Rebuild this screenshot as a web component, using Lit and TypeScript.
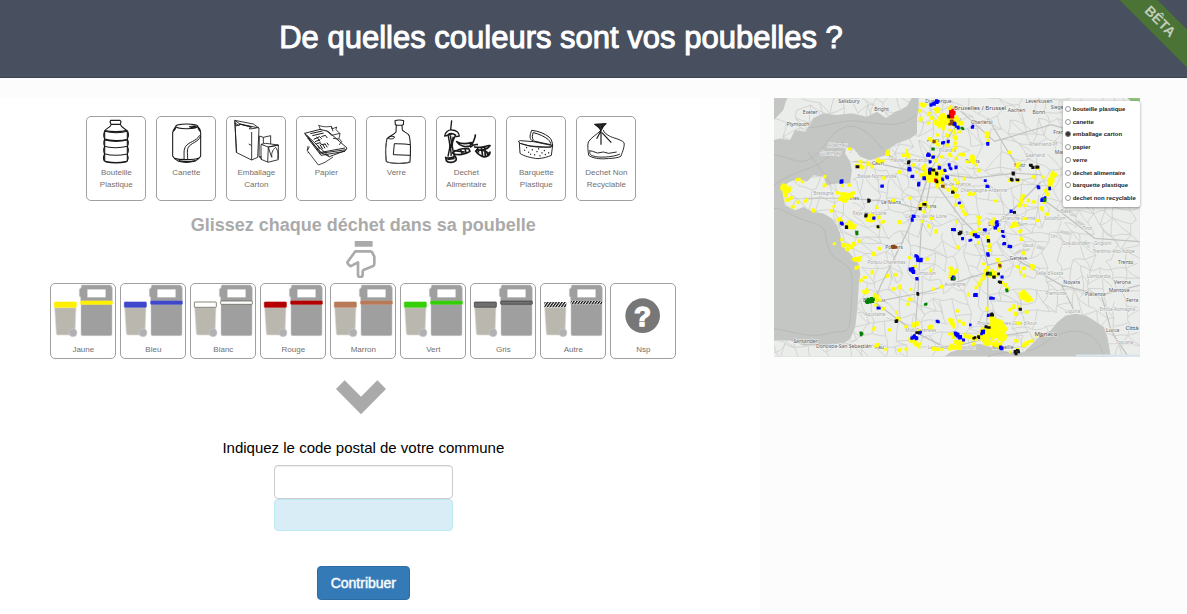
import { LitElement, html, css, svg } from "lit";
import { customElement, state } from "lit/decorators.js";

/* ---------- Waste drawings ---------- */

const bottle = svg`
  <path d="M95 31h28l3 4-2 8h-28l-3-7zM97 43c-3 10-17 12-20 20v90c8 6 60 6 68 0V65c-4-9-17-11-21-22" stroke-width="3.4"/>
  <path d="M78 64c20 6 50 5 69-1M77 87c18 6 50 6 68 1M77 90c20 5 48 5 68 0M76 109c18 6 50 5 69 0M76 131c20 6 50 5 69 1M77 64c-4 8-3 18 0 24-4 5-3 16 0 22-5 5-3 18 0 22-4 6-5 14-1 22M146 64c4 8 2 18-1 24 4 6 3 16 0 22 4 6 3 17 0 23 3 6 3 14 0 20" stroke-width="3.2"/>
  <path d="M77 62c20 4 48 4 68-1M78 154c20 6 48 5 66 0" stroke-width="4"/>`;

const can = svg`
  <ellipse cx="323" cy="49" rx="33" ry="7" stroke-width="3.2"/>
  <path d="M290 50c-3 4-8 12-9 18v70c3 6 11 13 18 16 14 4 36 3 50-1 6-3 13-9 16-14V66c-1-6-6-14-10-18M281 66c6-4 8-8 10-14M365 66c-5-4-7-9-9-15" stroke-width="3.2"/>
  <path d="M315 149c1-20-2-28 5-40 10-14 32-15 41-32l4 2c-8 18-30 20-37 33-5 10-2 18-2 37" stroke-width="3"/>
  <path d="M286 145c20 6 58 5 74-1M299 152c14 3 36 3 50 0" stroke-width="4"/>
  <path d="M330 50l18-3 6 5-16 2z" fill="#111" stroke-width="2"/>`;

const boxes = svg`
  <path d="M467 31l16 11 57 12-17-12zM467 31l6 97 45 22M483 42l-3 5-10-7 1 8 13-5 31 7-4 7 22-3M540 54l-4 88-18 8M518 66v84M483 42l35 10M468 34l4 94" stroke-width="2.6"/>
  <path d="M541 78l12 4 22-5v25M553 82v18M541 78l-1 62 8 6M546 103l14-3 38 5-8 2-22 4zM568 111l-2 45-20-8V104M598 105v44l-32 8M568 111l30-6M568 112l10 30M590 112c-10 8-14 20-11 30M590 112c8 12 8 22 6 34M540 140l8 1M509 102l8 4" stroke-width="2.6"/>`;

const papers = svg`
  <path d="M677 70l46-12 24 6 57 50-5 8-48 18zM677 70l5 8 44 49 72-13M751 140l-30-15M684 76l40 54 78-11M686 84l40 52 72-12" stroke-width="2.8"/>
  <path d="M694 71l36-8M700 77l34-8M704 88l18-8 6 6M708 95l16-6M712 101l12-3 3 6 12-2M727 80l12-4 6 8M713 80l10 14M716 106l6 12M723 104l8 13M731 103l7 12M738 101l7 11M744 98l5 8" stroke-width="3"/>
  <path d="M719 46c8 4 24 6 38 3l2 8 14-6-2 8 12 12-3 14 8 10-8 10M719 46l6 14M757 49l5 15M742 62l16 14 25-6M762 85l18 2M687 108l-2 14 33 43 20-8 24-16M685 122l6-12M690 127l-4 2" stroke-width="2.4"/>`;

const glass = svg`
  <path d="M105 32c6-3 20-3 26 0l-1 12c-6 2-18 2-24 0zM109 46l-1 20c-6 8-20 12-27 20-5 20-4 50-2 68 10 8 58 8 71 2 2-30 2-60-2-78-4-10-18-12-21-18l-1-16" stroke-width="3.2"/>
  <path d="M150 104c-16-3-32-2-47-3l-3 33 50 2M84 84c4-6 14-7 20-3-2 6-14 8-20 3" stroke-width="3"/>
  <path d="M80 95c-6 20-4 44-1 60M82 156c20 5 50 5 66 0" stroke="#666" stroke-width="3"/>`;

const food = svg`
  <path d="M275 31l-3 28M254 78c0-10 12-20 22-18 12 0 22 8 22 18l-9 2c-4-6-8-10-14-8-6 4-14 4-21 6zM262 76c6-8 16-8 26 0" stroke-width="4"/>
  <path d="M265 78c2 14 6 24 4 36-2 12-4 18-5 26M286 78c-8 12-10 20-9 32 2 14 4 20 6 28M272 76c-2 10 6 20 1 34-4 12 3 20 0 28M280 80c-4 12-2 20-5 30" stroke-width="4.4"/>
  <path d="M257 142c6 4 20 2 28-4 4 6 6 10 2 14-8 8-24 6-28 0zM262 148l22-3" stroke-width="5"/>
  <path d="M290 95c10 6 26 8 44 3l-4 10c-14 4-32 0-40-13zM278 128c12-8 30-14 48-12l4 8c-14 10-36 12-50 7zM346 73c2 12-8 22-10 32M330 112c8-8 14-10 24-8M300 116l6 14M315 116l3 12M282 122l32 4" stroke-width="5"/>
  <path d="M342 110c10 4 28 2 38-2 4-2 6-2 10-1-8 12-26 16-42 12M346 122c12-4 30-2 36 6 4 3 8 0 8-2 0 12-14 18-26 12-8-4-14-8-18-16M352 110l4 18M364 112l4 26M374 112l2 28M380 124l4 16" stroke-width="5"/>`;

const tray = svg`
  <path d="M475 94l6-2 40 3 57 12-6 5-62-4-30-8zM478 98l2 32c10 8 34 14 54 16 14-1 32-6 40-10l4-30M484 101c20 8 60 14 90 9" stroke-width="2.8"/>
  <path d="M516 92c-9-8-6-18-1-31 20 2 40 10 52 20 8 7 10 16 11 26M520 90c-5-6-3-16 0-23M520 68c18 4 34 12 44 20 6 6 8 10 9 17M516 92l56 12" stroke-width="3"/>
  <path d="M494 120v1M506 126v1M517 119v1M524 134v1M531 124v1M540 137v1M546 128v1M556 133v1M566 128v1M512 132v1M536 116v1M500 112v1M553 121v1" stroke-width="3.6" stroke-linecap="round"/>`;

const bag = svg`
  <path d="M723 60c-12 14-30 22-38 36-3 10-1 28 1 40 10 8 34 12 52 10 20-1 38-2 45-8 4-12 12-30 9-40-8-10-34-14-44-20-10-6-16-10-18-18M690 122c-2 8 0 14 10 16 14 6 60 4 80-6M688 122l10 2 14 5 18-3 16 4 24-4" stroke-width="2.8"/>
  <path d="M704 43l34-2-8 8-7 12-8-10zM723 62v42M726 68l28 30M722 64l-12 22M712 45l8 8M728 43l-4 10" fill="#333" stroke-width="3.6"/>`;

const WASTE = [
  { label: "Bouteille Plastique", art: bottle, box: "24 21 174 150" },
  { label: "Canette", art: can, box: "234 21 174 150" },
  { label: "Emballage Carton", art: boxes, box: "444 21 174 150" },
  { label: "Papier", art: papers, box: "654 21 174 150" },
  { label: "Verre", art: glass, box: "21 21 174 150" },
  { label: "Dechet Alimentaire", art: food, box: "231 21 174 150" },
  { label: "Barquette Plastique", art: tray, box: "441 21 174 150" },
  { label: "Dechet Non Recyclable", art: bag, box: "651 21 174 150" },
];

/* ---------- Bins ---------- */

const BINS = [
  { label: "Jaune", fill: "#fff000", edge: "#fff000" },
  { label: "Bleu", fill: "#3f48cc", edge: "#3f48cc" },
  { label: "Blanc", fill: "#ffffff", edge: "#4a4a3c" },
  { label: "Rouge", fill: "#b50000", edge: "#b50000" },
  { label: "Marron", fill: "#b97a57", edge: "#b97a57" },
  { label: "Vert", fill: "#35cf0a", edge: "#35cf0a" },
  { label: "Gris", fill: "#6f6f6f", edge: "#2b2b2b" },
  { label: "Autre", fill: "url(#hatch)", edge: "none" },
];

const binArt = (fill: string, edge: string) => svg`
  <defs>
    <pattern id="hatch" width="7" height="7" patternUnits="userSpaceOnUse" patternTransform="rotate(35)">
      <rect width="7" height="7" fill="#fff"/><rect width="4" height="7" fill="#111"/>
    </pattern>
  </defs>
  <path d="M47 98h64l-3 78q0 4-4 4H57q-4 0-5-4z" fill="#b9b7ae" stroke="#dddcd8" stroke-width="2"/>
  <circle cx="102" cy="173" r="12" fill="#b1b1b3" stroke="#cfcfd0" stroke-width="1.5"/>
  <path d="M128 30h84q8 2 8 12v36h-95V66l-4-2V42l5-3z" fill="#9f9f9f" stroke="#c9c9c9" stroke-width="1.5"/>
  <rect x="145" y="43" width="55" height="24" fill="#fff" stroke="#c4c4c4"/>
  <path d="M126 88h93v89q0 5-5 5h-83q-5 0-5-5z" fill="#9f9f9f" stroke="#c9c9c9" stroke-width="1.5"/>
  <rect x="46" y="81" width="66" height="16" rx="2" fill=${fill} stroke=${edge} stroke-width="2"/>
  <rect x="125" y="78" width="95" height="10" rx="2" fill=${fill} stroke=${edge} stroke-width="2"/>`;

/* ---------- Map ---------- */

// Small deterministic generator, so that the map is identical on each render.
function randomizer(seed: number) {
  let s = seed;
  return () => (s = (s * 16807) % 2147483647) / 2147483647;
}

const LAND = [
  // Great Britain
  "M0 126L18 121 48 126 63 96 93 101 118 60 148 46 188 51 233 46 278 56 308 41 335 60 363 41 378 36 398 24 412 0H38L28 36 0 66Z",
  // Continent
  "M433 0V21L428 66V106L408 121 368 136 338 156 333 171 288 186 258 176 238 151 216 148 213 166 228 191 233 216 228 256 188 256 158 261 148 236 118 231 98 251 73 241 48 251 23 266 28 296 33 321 63 336 88 326 118 341 148 346 173 361 188 381 198 406 203 441 228 466 253 496 258 526 253 566 250 626 243 686 228 721 208 734 138 741 88 741 48 726 0 726V774H510L528 761 558 751 588 738 618 736 668 751 708 761 748 761 773 736 798 711 828 696 848 671 873 651 903 646 933 651 958 666 988 686 998 716 1008 774H1095V0Z",
];

const SEA_LINES =
  "M0 170C60 175 90 230 160 130S300 120 330 160M0 260C70 210 120 220 170 170S200 130 215 150M30 80C120 110 180 60 260 70S380 90 425 50M0 330C30 330 60 360 110 372S150 400 160 440 190 480 215 500 235 560 230 640 215 690 160 705 60 700 0 690M640 774C700 750 760 770 800 740S880 690 920 700 980 740 985 774M170 261C150 220 120 190 100 160";

const BIG_ROADS =
  "M430 330L465 225 520 120 560 60M470 225L600 240 720 225 800 230M465 230L560 360 620 420 640 500 640 640 630 720M460 235L430 330 350 310 220 300 90 300M430 330L380 440 320 560 300 610M300 610L420 700 520 750 630 720 760 700M640 400L720 330 800 250M640 500L720 480 860 560 980 590 1095 560M330 165L400 200 465 225M300 610L460 580 640 520M470 240L440 400 430 600 420 720M860 560L900 640M980 590L1010 700 1060 774M640 60L700 160 740 220M560 40L660 130 830 80 900 100M800 300L870 350 960 420 1095 430M240 190L330 200 400 215";

function minorRoads() {
  const rnd = randomizer(4211);
  const cols = 33;
  const rows = 24;
  const step = 34;
  const pts: number[][] = [];
  for (let r = 0; r < rows; r++)
    for (let c = 0; c < cols; c++)
      pts.push([c * step + (rnd() - 0.5) * 30, r * step + (rnd() - 0.5) * 30]);
  let d = "";
  const link = (a: number[], b: number[]) => {
    const mx = (a[0] + b[0]) / 2 + (rnd() - 0.5) * 16;
    const my = (a[1] + b[1]) / 2 + (rnd() - 0.5) * 16;
    d += `M${a[0] | 0} ${a[1] | 0}Q${mx | 0} ${my | 0} ${b[0] | 0} ${b[1] | 0}`;
  };
  for (let r = 0; r < rows - 1; r++)
    for (let c = 0; c < cols - 1; c++) {
      const i = r * cols + c;
      if (rnd() > 0.3) link(pts[i], pts[i + 1]);
      if (rnd() > 0.3) link(pts[i], pts[i + cols]);
      if (rnd() > 0.72) link(pts[i], pts[i + cols + 1]);
    }
  return d;
}

// Each quadrant of the map has its own origin; a spot is "x y radius".
const QUADRANTS = [
  {
    origin: "translate(-12,-24)",
    spots: {
      "#ffff00": "455 45 8,447 62 5,450 88 6,463 45 5,475 72 6,485 82 6,500 60 9,515 75 8,510 98 16,530 92 18,545 100 14,560 85 8,540 55 6,495 95 8,475 100 5,540 120 5,530 135 5,520 115 5,500 135 5,480 150 7,495 155 7,503 165 4,530 165 5,555 160 5,560 140 5,565 125 5,515 200 5,540 195 6,548 180 5,560 205 5,485 195 5,495 210 6,505 225 6,460 235 6,455 255 9,470 250 12,485 245 14,495 260 18,480 265 12,510 268 12,515 245 8,500 285 8,520 290 5,535 300 6,545 290 5,465 225 5,440 245 5,430 225 4,415 195 8,400 197 5,410 182 4,352 188 7,340 210 5,325 212 8,295 220 6,305 228 5,275 228 8,270 215 4,238 175 5,343 264 5,385 245 5,370 330 4,320 350 5,300 385 14,325 380 5,388 392 6,338 395 4,260 225 5,85 268 6,97 275 5,40 290 10,55 298 9,45 310 9,60 325 7,50 330 6,70 350 6,85 337 5,108 332 7,130 360 5,165 285 6,163 260 4,200 308 5,215 312 5,225 322 14,240 315 8,212 325 7,250 310 4,192 350 5,208 388 8,215 398 6,240 402 8,185 362 4,215 285 5,240 285 4,465 340 7,450 345 5,475 350 5,460 365 5,420 325 4,555 345 5,560 320 4,485 385 4,455 392 4",
      "#0000ff": "490 40 7,500 34 6,483 44 5,553 102 6,560 110 5,533 153 4,518 158 4,475 195 7,490 202 5,478 215 4,418 235 6,425 258 5,445 282 5,460 265 4,480 240 6,505 235 6,535 225 5,525 240 5,530 260 5,515 268 4,215 272 6,334 287 5,430 377 5,312 385 5,425 388 4,555 232 4",
      "#ff0000": "545 65 8,540 78 7,548 72 6,494 270 3",
      "#8b4513": "547 97 6,540 102 5,490 153 5,517 290 4",
      "#008000": "490 176 5",
      "#111111": "262 228 5,416 216 5,478 248 4,500 273 4,488 240 4,295 330 6,448 356 4,548 306 4,288 377 5,462 342 4,534 80 4,500 250 3",
    },
    names: [
      [204, 38, "Salisbury"], [98, 72, "Exeter"], [50, 108, "Plymouth"], [312, 62, "Bright"],
      [465, 40, "Dunkerque"], [470, 157, "Arras"], [305, 224, "Caen"], [215, 330, "Rennes"],
      [333, 342, "Le Mans"], [443, 352, "Orléans"],
    ],
    regions: [
      [173, 170, "Alderney"], [150, 196, "Guernsey"], [360, 217, "Haute-Normandie"], [505, 187, "Picardie"],
      [262, 262, "Basse-Normandie"], [130, 314, "Bretagne"], [515, 286, "Île-de-France"],
      [247, 374, "Pays de la Loire"], [405, 384, "Centre-Val de Loire"],
    ],
  },
  {
    origin: "translate(528,-24)",
    spots: {
      "#ffff00": "25 98 7,35 100 7,12 125 6,15 145 7,12 160 5,14 175 5,28 192 4,40 195 4,110 128 6,108 140 6,112 150 4,65 205 10,68 215 8,50 215 4,75 225 5,85 240 6,175 185 4,202 222 7,200 232 5,205 268 5,198 272 5,180 270 4,262 232 3,15 270 5,20 280 5,10 300 8,18 318 6,60 310 7,72 312 5,42 265 4,308 252 10,300 270 11,298 282 8,285 300 7,290 312 6,250 262 5,278 262 4,280 335 7,275 355 7,288 372 5,250 335 4,218 318 6,212 332 6,208 345 6,235 330 4,222 345 5,262 392 4,135 332 4,85 382 6,130 385 5,35 350 6,40 362 5,45 370 5,20 395 5,125 400 8,222 385 4,195 400 6,5 90 5",
      "#0000ff": "12 102 5,22 112 5,67 110 4,110 162 3,103 270 4,112 288 5,264 291 5,298 294 5,280 325 8,275 328 5,137 398 5,180 364 4,27 340 4,0 235 4",
      "#ff0000": "4 68 8,5 80 5",
      "#8b4513": "5 96 6",
      "#008000": "36 114 4,283 330 3",
      "#111111": "240 226 5,245 232 4,261 230 3,184 268 4,190 250 4,200 270 3,192 364 4,8 307 3",
    },
    names: [
      [172, 67, "Aachen"], [246, 71, "Bonn"], [225, 40, "Leverkusen"], [62, 103, "Charleroi"],
      [300, 56, "Siege"], [45, 219, "Reims"], [190, 232, "Metz"], [308, 132, "Fran"], [312, 192, "Man"],
    ],
    regions: [
      [236, 168, "Rheinland-Pf"], [225, 200, "Saarland"], [30, 304, "Champagne-Ardenne"],
      [155, 388, "Franche-Comté"], [330, 368, "Basel"], [280, 390, "Solothurn"],
    ],
  },
  {
    origin: "translate(-12,366)",
    spots: {
      "#ffff00": "240 15 12,250 18 8,235 8 5,325 20 5,338 5 4,388 5 4,475 17 5,498 34 6,192 69 5,215 58 5,222 75 6,238 75 6,252 70 6,245 82 4,230 88 4,268 62 4,310 102 6,328 85 5,265 115 8,252 117 6,260 140 6,272 182 5,284 170 4,305 155 4,352 166 4,375 163 5,286 212 8,312 226 6,322 228 5,318 240 6,328 238 5,316 252 5,340 265 5,418 112 5,433 137 4,482 150 4,390 200 6,370 205 4,420 205 5,420 238 6,415 250 4,490 205 4,513 198 5,540 145 6,545 160 9,558 152 6,540 170 6,380 275 4,384 295 7,430 312 8,440 310 6,445 330 4,480 320 8,500 385 5,542 300 9,548 310 6,565 300 5,312 324 5,360 328 4,408 320 4,420 358 8,438 370 7,450 372 5,432 365 7,448 380 4,388 388 5,320 375 7,345 385 4,408 385 4,490 385 6,512 385 4,560 365 9,545 375 6,568 380 6,535 385 5,470 118 4",
      "#0000ff": "215 10 5,440 108 6,448 118 8,425 148 8,430 152 6,441 175 4,326 263 4,450 337 4,430 350 8,438 352 6,502 304 5,557 340 6,562 345 5,548 27 5,440 115 4",
      "#8b4513": "368 80 6,375 80 4",
      "#008000": "260 38 4,295 240 9,306 238 7,290 244 6,272 340 6,466 250 3,552 170 5",
      "#111111": "227 20 4,443 220 4,380 302 3,440 335 4,568 38 3,325 18 3,548 175 3",
    },
    names: [
      [345, 86, "Poitiers"], [278, 246, "Bordeaux"], [70, 367, "Santander"],
      [138, 383, "Donostia-San Sebastián"], [314, 384, "Pau"],
    ],
    regions: [
      [292, 132, "Poitou-Charentes"], [437, 165, "Limousin"], [522, 198, "Auvergne"], [283, 288, "Aquitaine"],
      [405, 335, "Midi-Pyrénées"], [472, 384, "Languedoc-Roussillon"],
    ],
  },
  {
    origin: "translate(528,366)",
    spots: {
      "#ffff00": "190 15 9,200 12 6,180 18 4,85 8 6,65 40 6,72 35 4,85 68 4,110 50 4,116 75 5,118 88 5,22 82 5,88 25 4,125 8 6,145 30 5,210 33 4,212 55 3,5 150 8,8 160 7,18 148 5,100 128 4,112 143 5,125 155 10,118 165 7,105 155 7,100 165 5,142 118 6,148 130 5,145 142 5,135 168 4,85 190 6,95 178 5,100 172 5,155 185 5,165 195 5,172 205 5,78 200 4,200 140 4,220 142 6,245 140 9,222 165 4,212 155 3,220 98 4,20 270 5,55 222 3,205 260 5,192 258 6,180 268 6,215 220 10,225 225 12,235 235 12,215 230 9,228 275 4,195 280 4,110 265 4,125 290 8,130 300 12,145 310 16,160 325 12,125 325 14,110 335 14,140 335 16,155 350 14,105 350 14,90 350 12,125 345 14,110 365 10,135 370 10,150 370 6,100 330 10,5 305 7,10 318 5,0 340 6,40 310 5,45 345 7,55 350 6,35 365 6,20 378 9,12 350 7,5 380 8,65 355 8,78 358 6,205 308 6,198 360 4,228 370 6,235 365 5,245 360 5,258 345 5,180 395 5,145 378 6,200 385 4,220 375 4,70 372 5",
      "#0000ff": "10 28 4,38 55 5,60 60 5,75 45 6,82 50 4,102 30 4,135 25 5,140 15 4,155 35 5,158 48 4,160 70 4,178 78 3,113 103 5,10 170 4,75 222 6,120 232 5,130 235 5,155 172 3,18 342 6,28 350 6,38 360 5,58 312 4,100 333 6,95 340 4,152 382 6,115 285 4,138 5 4",
      "#8b4513": "148 136 4,270 342 6",
      "#008000": "120 160 5,170 210 5,12 172 4",
      "#111111": "30 37 4,115 60 3,110 160 4,142 160 4,148 184 3,130 168 3,208 268 4,125 282 6,115 322 5,108 320 4,198 388 5,198 398 4,192 393 4,204 393 4,72 352 3,85 350 3",
    },
    names: [
      [113, 16, "Dijon"], [177, 120, "Genève"], [338, 190, "Novara"], [502, 132, "Trento"], [490, 191, "Verona"],
      [403, 226, "Piacenza"], [474, 216, "Mantova"], [526, 246, "Ferra"], [466, 335, "Lucca"], [125, 384, "Marseille"],
    ],
    regions: [
      [45, 45, "Bourgogne"], [200, 16, "Bern"], [215, 80, "Vaud"], [255, 163, "Valle d'Aosta"], [408, 173, "Lombardia"],
      [425, 98, "Trentino-Alto Adige"], [335, 74, "Graubünden - Grigioni"], [285, 224, "Piemonte"],
      [446, 273, "Emilia-Romagna"], [343, 277, "Liguria"], [495, 369, "Toscana"],
      [80, 314, "Provence-Alpes-Côte d'Azur"], [300, 54, "Uri"], [395, 30, "Tirol"],
    ],
  },
];

const rndSpot = randomizer(977);

// Turns a list of spots into a path made of little clustered blocks.
function spotPath(list: string) {
  let d = "";
  for (const item of list.split(",")) {
    const [x, y, r] = item.split(" ").map(Number);
    const n = r < 6 ? 2 : Math.round((r * r) / 9);
    for (let i = 0; i < n; i++) {
      const a = rndSpot() * 6.28;
      const k = r < 6 ? 2 : (r - 2) * Math.sqrt(rndSpot());
      const s = 7 + rndSpot() * 3;
      d += `M${Math.round(x + Math.cos(a) * k - s / 2)} ${Math.round(y + Math.sin(a) * k - s / 2)}h${s.toFixed(1)}v${s.toFixed(1)}h-${s.toFixed(1)}z`;
    }
  }
  return d;
}

const MAP_ART = svg`
  <defs><clipPath id="land"><path d=${LAND.join("")}/></clipPath></defs>
  <rect width="1095" height="774" fill="#c4c6c4"/>
  <path d=${SEA_LINES} fill="none" stroke="#b4b6b4" stroke-width="2.5"/>
  <path d=${LAND.join("")} fill="#ebedeb"/>
  <g clip-path="url(#land)" fill="none">
    <path d="M715 470q12-18 34-17l18-4-4 8-22 4q-14 8-26 9zM880 340l20 6 8 12-22-6zM860 395l30 10-8 6-30-8zM910 365l22 14-4 8-24-14zM935 425l12 22-8 2-10-20zM790 440l22 8-6 8-22-6zM850 345l14 20-20 4z" fill="#d2d4d2"/>
    <path d=${minorRoads()} stroke="#cfd1cf" stroke-width="2.6"/>
    <path d=${BIG_ROADS} stroke="#c0c2c0" stroke-width="3.6"/>
  </g>
  <path d="M1058 0h37v34z" fill="#8fc07f"/>
  ${QUADRANTS.map(
    (q) => svg`<g transform=${q.origin}>
      ${q.names.map(([x, y, t]) => svg`<text class="town" x=${x} y=${y}>${t}</text>`)}
      ${q.regions.map(([x, y, t]) => svg`<text class="region" x=${x} y=${y}>${t}</text>`)}
      ${Object.entries(q.spots).map(([c, list]) => svg`<path d=${spotPath(list)} fill=${c}/>`)}
    </g>`
  )}
  <text class="capital" x="539" y="36">Bruxelles / Brussel</text>
  <text class="capital" x="780" y="712">Monaco</text>
  <text class="capital" x="1052" y="693">Città</text>
  <path d="M903 768h192v6H903z" fill="#d7e6ee"/>`;

const FILTERS = [
  "bouteille plastique",
  "canette",
  "emballage carton",
  "papier",
  "verre",
  "dechet alimentaire",
  "barquette plastique",
  "dechet non recyclable",
];

@customElement("waste-map")
export class WasteMap extends LitElement {
  @state() private selected = "emballage carton";

  static styles = css`
    :host {
      display: block;
      position: relative;
      font-family: "Liberation Sans", Arial, sans-serif;
    }
    .map {
      display: block;
      width: 100%;
      height: auto;
    }
    .town, .region, .capital {
      font-family: "Noto Sans", sans-serif;
      paint-order: stroke;
      stroke: #f4f5f4;
      stroke-width: 3px;
    }
    .town { font-size: 15px; fill: #555; }
    .region { font-size: 14px; fill: #a2a4a2; }
    .capital { font-size: 18px; fill: #444; }
    .filters {
      position: absolute;
      top: 1%;
      right: 0;
      bottom: 58%;
      width: 21%;
      box-sizing: border-box;
      margin: 0;
      padding: 2px;
      border: 0;
      border-radius: 2px;
      background: #fff;
      box-shadow: 0 1px 3px rgba(0, 0, 0, 0.4);
      display: flex;
      flex-direction: column;
      justify-content: space-around;
    }
    .filter {
      display: flex;
      align-items: center;
      gap: 2px;
      color: #222;
      font-size: 6px;
      line-height: 8px;
      font-weight: bold;
      white-space: nowrap;
    }
    .radio {
      appearance: none;
      flex: none;
      width: 6px;
      height: 6px;
      margin: 0;
      border: 1px solid #999;
      border-radius: 50%;
      background: #fff;
    }
    .radio:checked {
      border-color: #777;
      background: #333;
    }
  `;

  render() {
    return html`
      <svg class="map" viewBox="0 0 1095 774" role="img" aria-label="Carte de France">${MAP_ART}</svg>
      <div class="filters" role="radiogroup" aria-label="Type de déchet">
        ${FILTERS.map(
          (f) => html`<label class="filter">
            <input class="radio" type="radio" name="filter" .checked=${this.selected === f}
              @change=${() => (this.selected = f)} />${f}
          </label>`
        )}
      </div>
    `;
  }
}

@customElement("app-root")
export class AppRoot extends LitElement {
  static styles = css`
    :host {
      display: block;
      min-height: 100vh;
      background: #fcfcfc;
      color: #000;
      font-family: "Liberation Sans", Arial, sans-serif;
    }
    .header {
      position: relative;
      overflow: hidden;
      padding: 18px 65px 19px 0;
      border-bottom: 1px solid #3d4351;
      background: #484f5f;
      text-align: center;
    }
    .title {
      margin: 0;
      color: #fff;
      font-size: 31px;
      line-height: 40px;
      font-weight: normal;
      -webkit-text-stroke: 1px #fff;
    }
    .ribbon {
      position: absolute;
      top: 8px;
      right: -33px;
      width: 120px;
      background: #4a7335;
      color: #c3cdbc;
      font-size: 14px;
      line-height: 27px;
      font-weight: bold;
      transform: rotate(45deg);
    }
    .main {
      display: flex;
      align-items: flex-start;
      padding-top: 20px;
    }
    .game {
      box-sizing: border-box;
      width: 64%;
      padding: 18px 33px 15px 0;
      border-radius: 4px;
      background: #fff;
      display: flex;
      flex-direction: column;
      align-items: center;
    }
    .aside {
      flex: 1;
      padding: 0 4% 0 14px;
    }
    .row {
      display: flex;
      margin: 0;
      padding: 0;
      list-style: none;
    }
    .wastes { gap: 10px; margin-right: 4px; }
    .bins { gap: 4px; margin-top: 5px; }
    .card {
      box-sizing: border-box;
      border: 1px solid #a0a0a0;
      border-radius: 5px;
      background: #fff;
      color: #707070;
      font-size: 8px;
      line-height: 12px;
      text-align: center;
      cursor: grab;
    }
    .waste { width: 60px; height: 85px; }
    .bin { width: 66px; height: 76px; }
    .art { display: block; width: 100%; }
    .sketch {
      height: 50px;
      fill: none;
      stroke: #1a1a1a;
      stroke-linejoin: round;
    }
    .name { display: block; padding: 0 4px; }
    .mark {
      fill: #fff;
      stroke: #fff;
      stroke-width: 4px;
      font-size: 84px;
      font-weight: bold;
    }
    .hint {
      margin: 12px 0 4px;
      color: #aaa;
      font-size: 18px;
      line-height: 24px;
      font-weight: bold;
    }
    .hand, .chevron { display: block; margin-right: 4px; }
    .chevron { margin-top: 21px; }
    .form {
      display: flex;
      flex-direction: column;
      align-items: center;
      margin-top: 23px;
    }
    .label { font-size: 15px; line-height: 20px; }
    .input, .result {
      box-sizing: border-box;
      width: 179px;
      border-radius: 4px;
    }
    .input {
      height: 34px;
      margin: 7px 0 0;
      padding: 6px 12px;
      border: 1px solid #ccc;
      background: #fff;
      box-shadow: inset 0 1px 1px rgba(0, 0, 0, 0.075);
      font: 14px "Liberation Sans", Arial, sans-serif;
    }
    .result {
      height: 32px;
      border: 1px solid #bce8f1;
      background: #d9edf7;
    }
    .submit {
      margin: 35px 0 0;
      padding: 6px 13px;
      border: 1px solid #2e6da4;
      border-radius: 4px;
      background: #337ab7;
      color: #fff;
      font: 14px/20px "Liberation Sans", Arial, sans-serif;
      -webkit-text-stroke: 1px rgba(255, 255, 255, 0.5);
      cursor: pointer;
    }
  `;

  render() {
    return html`
      <header class="header">
        <h1 class="title">De quelles couleurs sont vos poubelles ?</h1>
        <div class="ribbon">BÊTA</div>
      </header>
      <main class="main">
        <section class="game">
          <ul class="row wastes">
            ${WASTE.map(
              (w) => html`<li class="card waste" draggable="true">
                <svg class="art sketch" viewBox=${w.box} aria-hidden="true">${w.art}</svg>
                <span class="name">${w.label}</span>
              </li>`
            )}
          </ul>
          <h2 class="hint">Glissez chaque déchet dans sa poubelle</h2>
          <svg class="hand" width="30" height="37" viewBox="0 0 90 111" aria-hidden="true">
            <rect x="26" y="0" width="54" height="17" rx="2" fill="#aaa"/>
            <path d="M28 31h44q6 0 8 6l5 10v22q0 5-5 7l-26 10q-4 2-4 6v9q0 7-7 7t-7-7V64L17 74q-4 3-8-2t-5-8z" fill="none" stroke="#aaa" stroke-width="8" stroke-linejoin="round"/>
          </svg>
          <ul class="row bins">
            ${BINS.map(
              (b) => html`<li class="card bin">
                <svg class="art" viewBox="36 27 192 180" aria-hidden="true">${binArt(b.fill, b.edge)}</svg>
                <span class="name">${b.label}</span>
              </li>`
            )}
            <li class="card bin">
              <svg class="art" viewBox="0 0 192 180" aria-hidden="true">
                <circle cx="95" cy="95" r="52" fill="#777"/>
                <text class="mark" x="95" y="125" text-anchor="middle">?</text>
              </svg>
              <span class="name">Nsp</span>
            </li>
          </ul>
          <svg class="chevron" width="52" height="35" viewBox="0 0 156 105" aria-hidden="true">
            <path d="M3 27L29 1l49 49 49-49 26 26-75 76z" fill="#aaa"/>
          </svg>
          <form class="form" @submit=${(e: Event) => e.preventDefault()}>
            <label class="label" for="postcode">Indiquez le code postal de votre commune</label>
            <input class="input" id="postcode" type="text" inputmode="numeric" />
            <output class="result" for="postcode"></output>
            <button class="submit" type="submit">Contribuer</button>
          </form>
        </section>
        <aside class="aside"><waste-map></waste-map></aside>
      </main>
    `;
  }
}
